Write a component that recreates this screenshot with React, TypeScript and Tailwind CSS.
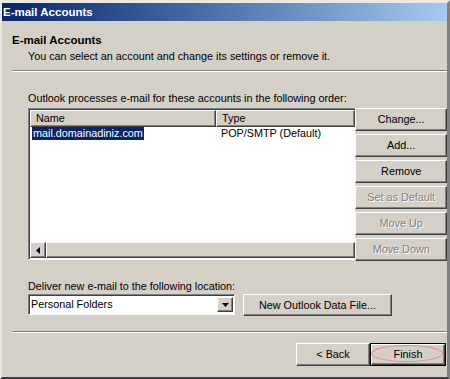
const raised =
  "border border-t-white border-l-white border-r-[#404040] border-b-[#404040] shadow-[inset_-1px_-1px_0_#808080]";
const sunken =
  "border border-t-[#808080] border-l-[#808080] border-r-white border-b-white shadow-[inset_1px_1px_0_#404040]";

const Btn = ({
  label,
  className = "",
  disabled = false,
}: {
  label: string;
  className?: string;
  disabled?: boolean;
}) => (
  <div
    className={`flex items-center justify-center bg-[#d4d0c8] ${raised} ${
      disabled ? "text-[#808080] [text-shadow:1px_1px_0_#fff]" : "text-black"
    } ${className}`}
  >
    {label}
  </div>
);

const sideButtons = [
  { label: "Change...", disabled: false },
  { label: "Add...", disabled: false },
  { label: "Remove", disabled: false },
  { label: "Set as Default", disabled: true },
  { label: "Move Up", disabled: true },
  { label: "Move Down", disabled: true },
];

export default function App() {
  return (
    <div className="w-[450px] h-[379px] bg-[#d4d0c8] border-t-[3px] border-l-2 border-t-[#ece9e2] border-l-[#ece9e2] border-r-[3px] border-r-[#808080] border-b-2 border-b-[#404040] font-['Liberation_Sans',Arial,sans-serif] text-[10.8px] leading-[13px] text-black">
      {/* title bar */}
      <div className="h-[18px] flex items-center pl-[1px] pt-[1px] bg-gradient-to-r from-[#0a246a] to-[#a6caf0] text-white font-bold text-[11.5px]">
        E-mail Accounts
      </div>

      {/* header */}
      <div className="pt-[13px] pl-[10px] font-bold text-[11.5px]">E-mail Accounts</div>
      <div className="mt-[3px] pl-[26px]">
        You can select an account and change its settings or remove it.
      </div>
      <div className="mt-[7px] ml-[10px] h-[2px] border-t border-t-[#808080] border-b border-b-white" />

      {/* accounts */}
      <div className="mt-[20px] pl-[26px]">
        Outlook processes e-mail for these accounts in the following order:
      </div>
      <div className="mt-[3px] pl-[26px] flex">
        <div className="w-[329px] h-[152px] bg-white flex flex-col border border-r-0 border-t-[#808080] border-l-[#808080] border-b-white shadow-[inset_1px_1px_0_#404040]">
          <div className="flex h-[17px] ml-[1px] mt-[1px]">
            <div className={`w-[186px] bg-[#d4d0c8] pl-[5px] flex items-center ${raised}`}>Name</div>
            <div className={`flex-1 bg-[#d4d0c8] pl-[5px] flex items-center ${raised}`}>Type</div>
          </div>
          <div className="flex h-[13px]">
            <div className="w-[187px] pl-[3px]">
              <span className="bg-[#0a246a] text-white px-[1px] inline-block h-[13px]">
                mail.domainadiniz.com
              </span>
            </div>
            <div className="pl-[5px]">POP/SMTP (Default)</div>
          </div>
          <div className="flex-1" />
          <div className="flex h-[16px] ml-[1px] mb-[1px]">
            <div className={`w-[16px] bg-[#d4d0c8] flex items-center justify-center ${raised}`}>
              <svg width="4" height="7" viewBox="0 0 4 7">
                <path d="M4 0 L0 3.5 L4 7 Z" fill="#000" />
              </svg>
            </div>
            <div className={`flex-1 bg-[#d4d0c8] ${raised}`} />
          </div>
        </div>
        <div className="w-[92px] flex flex-col gap-[3px]">
          {sideButtons.map((b) => (
            <Btn key={b.label} label={b.label} disabled={b.disabled} className="h-[23px]" />
          ))}
        </div>
      </div>

      {/* deliver location */}
      <div className="mt-[19px] pl-[26px]">Deliver new e-mail to the following location:</div>
      <div className="mt-[1px] pl-[26px] flex items-start gap-[8px]">
        <div className={`w-[207px] h-[21px] bg-white flex items-center ${sunken}`}>
          <div className="flex-1 pl-[2px]">Personal Folders</div>
          <div className={`w-[16px] h-[15px] mr-[1px] bg-[#d4d0c8] flex items-center justify-center ${raised}`}>
            <svg width="7" height="4" viewBox="0 0 7 4">
              <path d="M0 0 H7 L3.5 4 Z" fill="#000" />
            </svg>
          </div>
        </div>
        <Btn label="New Outlook Data File..." className="w-[149px] h-[22px]" />
      </div>

      <div className="mt-[15px] ml-[10px] h-[2px] border-t border-t-[#808080] border-b border-b-white" />

      {/* footer */}
      <div className="mt-[10px] flex justify-end pr-[1px]">
        <Btn label="< Back" className="w-[74px] h-[23px]" />
        <div className="relative w-[76px] h-[23px] border border-black">
          <Btn label="Finish" className="w-full h-full" />
          <div className="absolute left-0 top-[1px] w-[72px] h-[17px] rounded-[50%] border border-[#e48c8c]" />
        </div>
      </div>
    </div>
  );
}
